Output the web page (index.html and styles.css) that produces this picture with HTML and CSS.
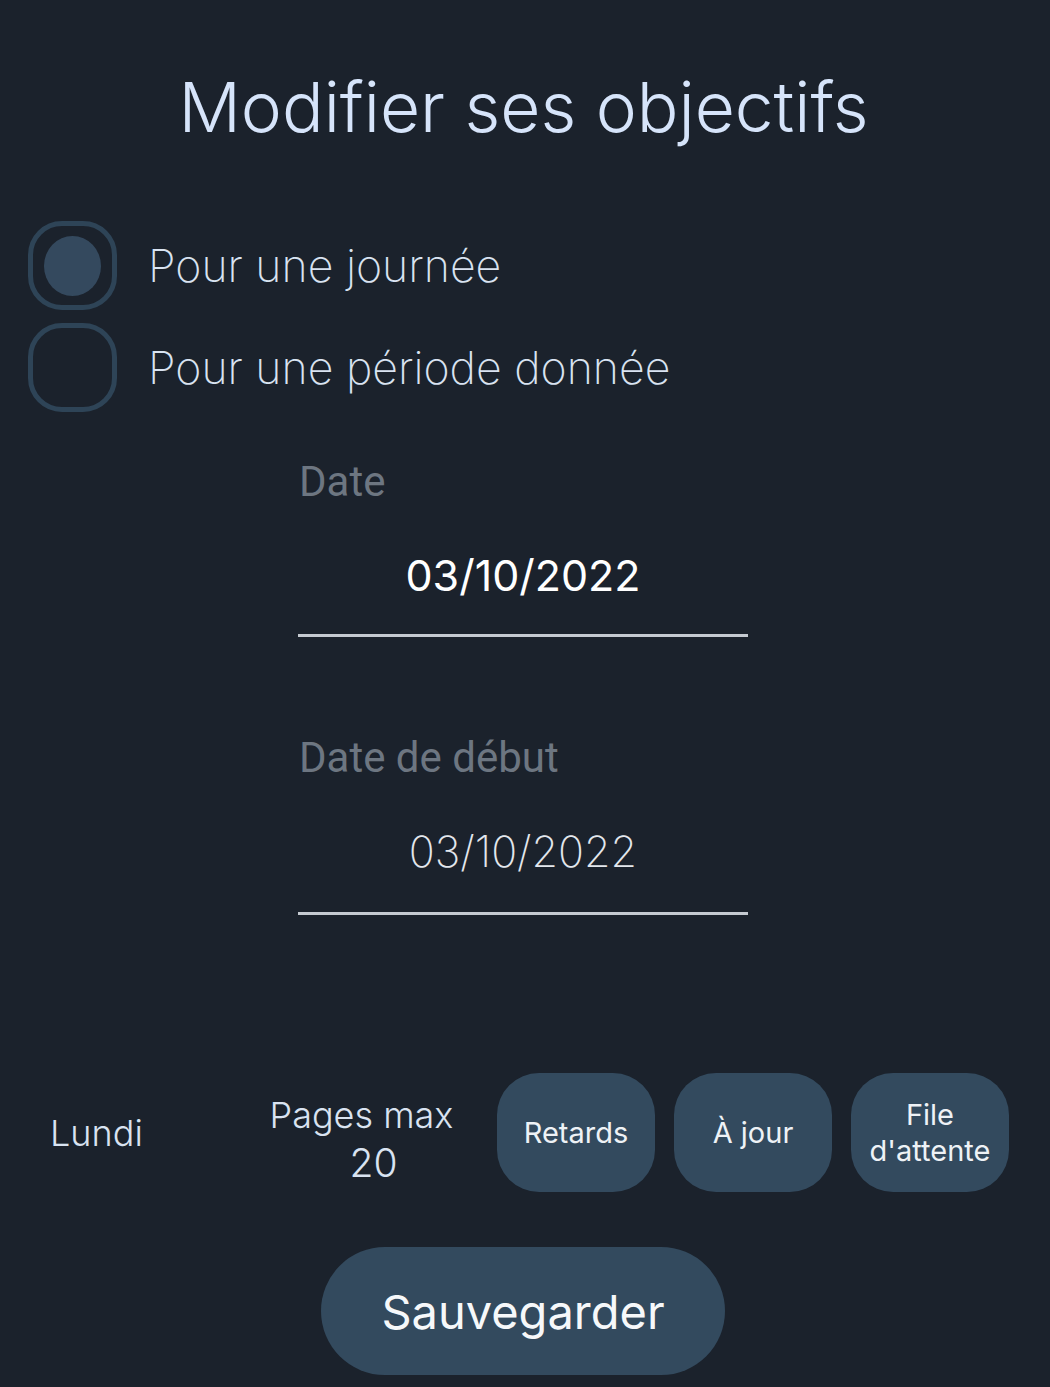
FILE: index.html
```html
<!DOCTYPE html>
<html lang="fr">
<head>
<meta charset="utf-8">
<title>Modifier ses objectifs</title>
<link rel="stylesheet" href="styles.css">
</head>
<body>
<main class="screen">
  <h1 class="title">Modifier ses objectifs</h1>

  <div class="radios">
    <label class="radio-row">
      <span class="radio"><span class="radio-dot"></span></span>
      <span class="radio-label">Pour une journée</span>
    </label>
    <label class="radio-row">
      <span class="radio"></span>
      <span class="radio-label">Pour une période donnée</span>
    </label>
  </div>

  <div class="field field-first">
    <div class="field-label">Date</div>
    <div class="field-value">03/10/2022</div>
  </div>

  <div class="field field-second">
    <div class="field-label">Date de début</div>
    <div class="field-value field-value-light">03/10/2022</div>
  </div>

  <div class="day-row">
    <div class="day-name">Lundi</div>
    <div class="pages">
      <span class="pages-title">Pages max</span>
      <span class="pages-num">20</span>
    </div>
    <button class="chip">Retards</button>
    <button class="chip">À jour</button>
    <button class="chip">File<br>d'attente</button>
  </div>

  <div class="save-wrap">
    <button class="save">Sauvegarder</button>
  </div>
</main>
</body>
</html>
```

FILE: styles.css
```css
html, body {
  margin: 0;
  padding: 0;
  background: #1b222c;
}

.screen {
  width: 1050px;
  height: 1387px;
  display: flex;
  flex-direction: column;
  font-family: Inter, "Liberation Sans", sans-serif;
}

.title {
  margin: 0;
  padding-top: 65px;
  padding-right: 3px;
  font-family: Inter, sans-serif;
  font-weight: 300;
  font-size: 69.3px;
  line-height: 84px;
  color: #d6e4fa;
  text-align: center;
}

.radios {
  margin-top: 72px;
  padding-left: 28px;
  display: flex;
  flex-direction: column;
  gap: 13px;
}

.radio-row {
  display: flex;
  align-items: center;
  gap: 31px;
}

.radio {
  box-sizing: border-box;
  width: 89px;
  height: 89px;
  border: 5px solid #2e4457;
  border-radius: 34px;
  display: flex;
  align-items: center;
  justify-content: center;
}

.radio-dot {
  width: 57px;
  height: 60px;
  border-radius: 50%;
  background: #34495e;
}

.radio-label {
  font-family: Inter, sans-serif;
  font-weight: 200;
  font-size: 44.6px;
  color: #d9e3f1;
}

.field {
  margin-left: 298px;
  width: 450px;
  display: flex;
  flex-direction: column;
}

.field-first {
  margin-top: 46px;
}

.field-second {
  margin-top: 97px;
}

.field-label {
  padding-left: 1px;
  font-family: Roboto, sans-serif;
  font-weight: 400;
  font-size: 42px;
  line-height: 48px;
  color: #6d7681;
}

.field-value {
  margin-top: 41px;
  padding-bottom: 31px;
  border-bottom: 3px solid #c5cad1;
  font-family: Inter, sans-serif;
  font-weight: 400;
  font-size: 43px;
  line-height: 56px;
  color: #ffffff;
  text-align: center;
}

.field-value-light {
  padding-bottom: 33px;
  font-weight: 200;
  color: #e3e7ed;
}

.day-row {
  margin-top: 158px;
  padding-left: 50px;
  display: flex;
  align-items: center;
}

.day-name {
  width: 200px;
  font-family: Inter, sans-serif;
  font-weight: 300;
  font-size: 36px;
  color: #d9e3f1;
}

.pages {
  width: 223px;
  margin-right: 24px;
  align-self: flex-start;
  margin-top: 19px;
  display: flex;
  flex-direction: column;
  align-items: center;
  font-family: Inter, sans-serif;
  font-weight: 300;
  color: #d9e3f1;
}

.pages-title {
  font-size: 36px;
  line-height: 46px;
}

.pages-num {
  padding-left: 24px;
  font-size: 39px;
  line-height: 50px;
}

.chip {
  width: 158px;
  height: 119px;
  margin-right: 19px;
  border: none;
  border-radius: 42px;
  background: #334a5e;
  color: #eef2f6;
  font-family: Inter, sans-serif;
  font-weight: 400;
  font-size: 29px;
  line-height: 36px;
  padding: 0;
}

.save-wrap {
  margin-top: 55px;
  display: flex;
  justify-content: center;
  padding-right: 4px;
}

.save {
  width: 404px;
  height: 128px;
  border: none;
  border-radius: 64px;
  background: #334a5e;
  color: #f6f8fa;
  font-family: Inter, sans-serif;
  font-weight: 400;
  font-size: 47px;
  padding: 0;
}
```
